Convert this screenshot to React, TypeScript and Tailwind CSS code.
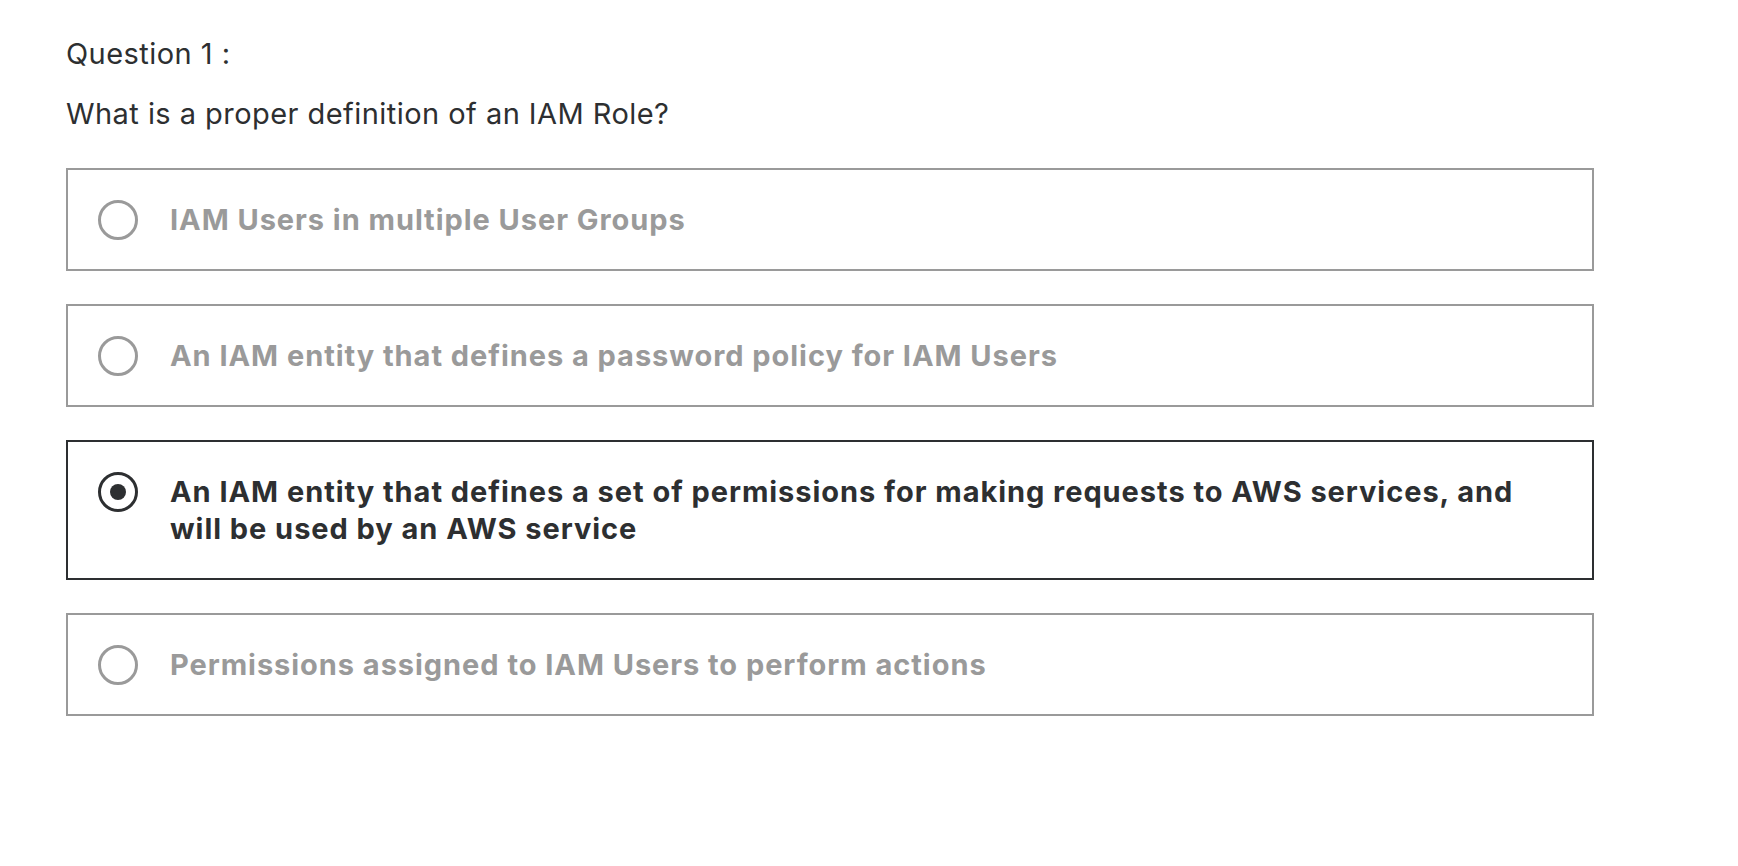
import React, { useState } from 'react';

interface Answer {
  id: string;
  text: string;
}

const answers: Answer[] = [
  { id: 'a', text: 'IAM Users in multiple User Groups' },
  { id: 'b', text: 'An IAM entity that defines a password policy for IAM Users' },
  {
    id: 'c',
    text: 'An IAM entity that defines a set of permissions for making requests to AWS services, and will be used by an AWS service'
  },
  { id: 'd', text: 'Permissions assigned to IAM Users to perform actions' }
];

const Radio: React.FC<{ checked: boolean }> = ({ checked }) => (
  <span className="h-[37px] flex items-center shrink-0">
    <span
      className={
        checked
          ? 'w-[40px] h-[40px] rounded-full border-[3.5px] border-[#2d2f31] flex items-center justify-center'
          : 'w-[40px] h-[40px] rounded-full border-[3.5px] border-[#9a9a9a] flex items-center justify-center'
      }
    >
      {checked && <span className="w-[16px] h-[16px] rounded-full bg-[#2d2f31]" />}
    </span>
  </span>
);

const App: React.FC = () => {
  const [selected, setSelected] = useState('c');

  return (
    <div className="min-h-screen bg-white font-['Inter','Liberation_Sans',sans-serif] text-[#2d2f31]">
      <div className="pl-[66px] pt-[35px] w-[1594px]">
        <p className="text-[29px] leading-[38px] tracking-[0.45px]">Question 1 :</p>
        <p className="text-[29px] leading-[38px] tracking-[0.45px] mt-[22px]">
          What is a proper definition of an IAM Role?
        </p>

        {/* answer options */}
        <div className="mt-[35px] flex flex-col gap-[33px]">
          {answers.map((answer) => {
            const checked = answer.id === selected;
            return (
              <label
                key={answer.id}
                onClick={() => setSelected(answer.id)}
                className={
                  checked
                    ? 'flex items-start gap-[32px] border-2 border-[#2d2f31] pl-[30px] pr-[34px] py-[31px] cursor-pointer'
                    : 'flex items-start gap-[32px] border-2 border-[#9a9a9a] pl-[30px] pr-[34px] py-[31px] cursor-pointer'
                }
              >
                <Radio checked={checked} />
                <span
                  className={
                    checked
                      ? 'text-[29px] leading-[37px] tracking-[0.95px] font-bold text-[#2d2f31]'
                      : 'text-[29px] leading-[37px] tracking-[0.95px] font-bold text-[#9a9a9a]'
                  }
                >
                  {answer.text}
                </span>
              </label>
            );
          })}
        </div>
      </div>
    </div>
  );
};

export default App;
